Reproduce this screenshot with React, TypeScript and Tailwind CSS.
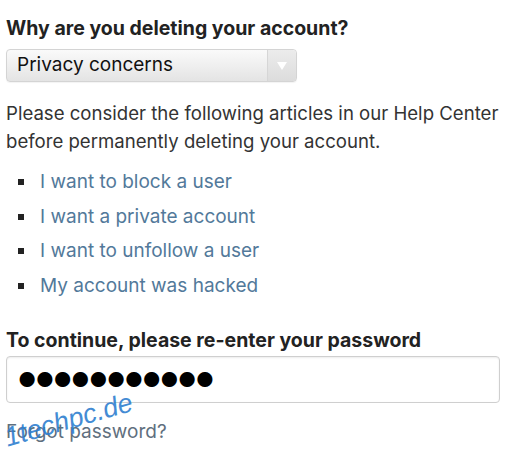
import React from 'react';

const links = [
  'I want to block a user',
  'I want a private account',
  'I want to unfollow a user',
  'My account was hacked',
];

function App() {
  return (
    <div className="relative w-[513px] h-[464px] overflow-hidden bg-white text-[#222] font-['Inter','Liberation_Sans',sans-serif]">
      <div className="px-[6px] pt-[16px]">
        <h2 className="text-[19.5px] font-bold leading-[24px]">Why are you deleting your account?</h2>

        {/* select */}
        <div className="mt-[9px] w-[291px] h-[33px] flex rounded-[4px] border border-[#d4d4d4] bg-gradient-to-b from-[#fafafa] to-[#e4e4e4] shadow-[0_1px_1px_rgba(0,0,0,0.05)]">
          <div className="flex-1 flex items-center pl-[10px] text-[19px] text-[#111]">Privacy concerns</div>
          <div className="w-[29px] flex items-center justify-center border-l border-[#d6d6d6] bg-gradient-to-b from-[#ececec] to-[#dcdcdc] rounded-r-[4px]">
            <svg width="10" height="8" viewBox="0 0 10 8">
              <path d="M0 0 H10 L5 8 Z" fill="#fff" />
            </svg>
          </div>
        </div>

        <p className="mt-[17px] text-[18.6px] leading-[28px] text-[#333] whitespace-nowrap">
          Please consider the following articles in our Help Center
          <br />
          before permanently deleting your account.
        </p>

        <ul className="mt-[10px] flex flex-col">
          {links.map((l) => (
            <li key={l} className="flex items-center h-[34.5px]">
              <span className="ml-[12px] w-[6px] h-[6px] bg-[#222]" />
              <a className="ml-[16px] text-[19px] text-[#52799a]">{l}</a>
            </li>
          ))}
        </ul>

        <h2 className="mt-[25px] text-[19.5px] font-bold leading-[24px]">To continue, please re-enter your password</h2>

        <div className="mt-[4px] w-[494px] h-[47px] flex items-center px-[11px] rounded-[4px] border border-[#cfcfcf] shadow-[inset_0_1px_2px_rgba(0,0,0,0.08)]">
          <span className="text-[20px] tracking-[-0.5px] text-black">●●●●●●●●●●●</span>
        </div>

        <a className="block mt-[15px] text-[19px] text-[#5f6f7e]">Forgot password?</a>
      </div>

      {/* watermark */}
      <div className="absolute left-[5px] top-[424px] -rotate-[16deg] origin-left text-[27px] leading-[28px] italic text-[#2f7fd0] font-['Liberation_Sans',sans-serif] opacity-90">
        1techpc.de
      </div>
    </div>
  );
}

export default App;
